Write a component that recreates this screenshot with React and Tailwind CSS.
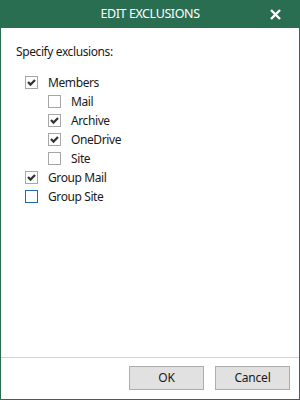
import React from "react";

const font = { fontFamily: '"Noto Sans", "Open Sans", sans-serif' };

function Box({ checked, focus }) {
  return (
    <div
      className={
        "w-[13px] h-[13px] bg-white flex items-center justify-center shrink-0 border " +
        (focus ? "border-[#1f66c1]" : "border-[#a6a6a6]")
      }
    >
      {checked && (
        <svg width="11" height="11" viewBox="0 0 11 11">
          <polyline points="2,5 4.5,7.6 9,3" fill="none" stroke="#333333" strokeWidth="2.2" />
        </svg>
      )}
    </div>
  );
}

function Row({ label, checked, focus, nested }) {
  return (
    <div className={"h-[19px] flex items-center gap-[10px] " + (nested ? "pl-[23px]" : "")}>
      <Box checked={checked} focus={focus} />
      <span className="text-[12px] leading-[16px] tracking-[-0.4px] text-[#1a1a1a]">{label}</span>
    </div>
  );
}

export default function App() {
  return (
    <div className="w-[300px] h-[400px] bg-[#2a6e52] px-px pb-px flex flex-col" style={font}>
      <div className="h-[28px] relative flex items-center justify-center text-white text-[12.5px] tracking-[-0.4px]">
        EDIT EXCLUSIONS
        <svg className="absolute left-[269px] top-[9px]" width="11" height="11" viewBox="0 0 11 11">
          <line x1="1" y1="1" x2="10" y2="10" stroke="white" strokeWidth="2.4" />
          <line x1="10" y1="1" x2="1" y2="10" stroke="white" strokeWidth="2.4" />
        </svg>
      </div>
      <div className="flex-1 bg-white flex flex-col pt-[16px] pl-[15px]">
        <div className="text-[12px] leading-[16px] tracking-[-0.4px] text-[#1a1a1a]">Specify exclusions:</div>
        <div className="mt-[13px] pl-[9px] flex flex-col">
          <Row label="Members" checked />
          <Row label="Mail" nested />
          <Row label="Archive" checked nested />
          <Row label="OneDrive" checked nested />
          <Row label="Site" nested />
          <Row label="Group Mail" checked />
          <Row label="Group Site" focus />
        </div>
      </div>
      <div className="h-[42px] bg-white border-t border-[#d2d2d2] flex items-start justify-end gap-[11px] pt-[8px] pr-[9px]">
        <button className="w-[75px] h-[24px] bg-[#e1e1e1] border border-[#adadad] text-[12px] tracking-[-0.2px] text-[#1a1a1a]">OK</button>
        <button className="w-[75px] h-[24px] bg-[#e1e1e1] border border-[#adadad] text-[12px] tracking-[-0.2px] text-[#1a1a1a]">Cancel</button>
      </div>
    </div>
  );
}
